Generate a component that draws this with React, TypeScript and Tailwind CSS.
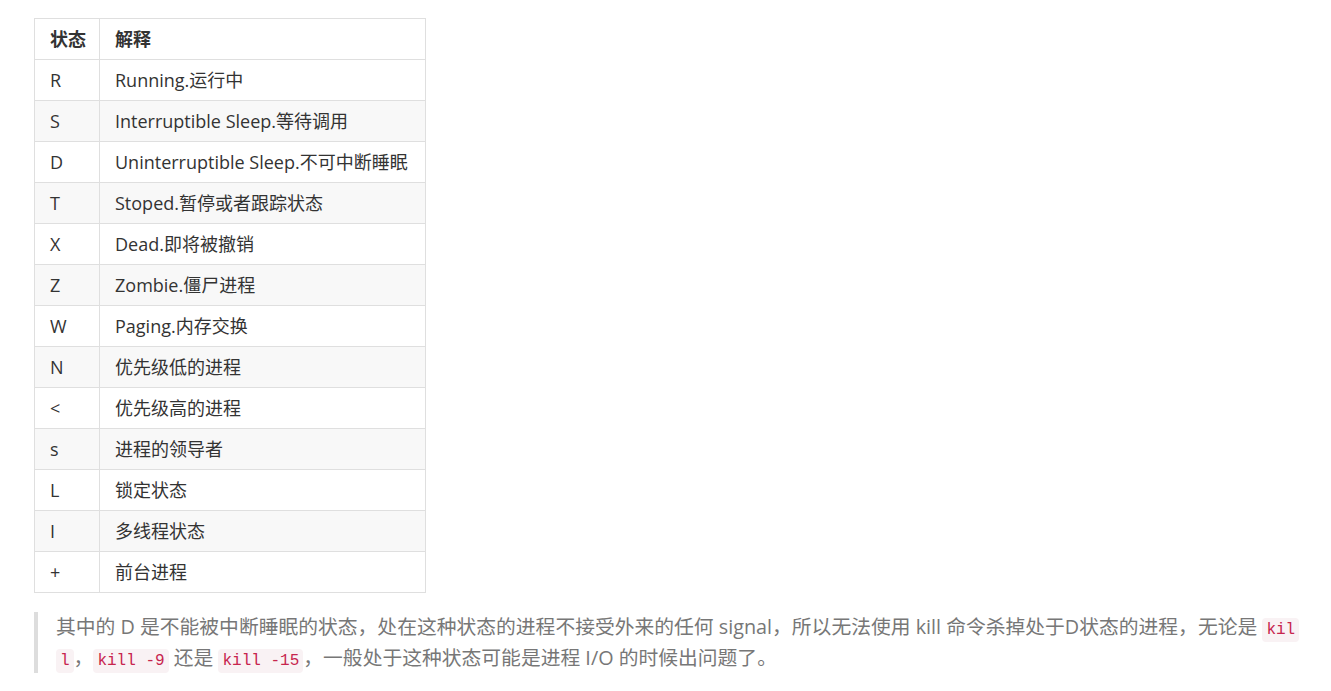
import React from "react";

const rows: [string, string][] = [
  ["R", "Running.运行中"],
  ["S", "Interruptible Sleep.等待调用"],
  ["D", "Uninterruptible Sleep.不可中断睡眠"],
  ["T", "Stoped.暂停或者跟踪状态"],
  ["X", "Dead.即将被撤销"],
  ["Z", "Zombie.僵尸进程"],
  ["W", "Paging.内存交换"],
  ["N", "优先级低的进程"],
  ["<", "优先级高的进程"],
  ["s", "进程的领导者"],
  ["L", "锁定状态"],
  ["I", "多线程状态"],
  ["+", "前台进程"],
];

const font = { fontFamily: '"Open Sans", "Noto Sans CJK SC", sans-serif' };

function Code({ children }: { children: React.ReactNode }) {
  return (
    <code className="font-['Liberation_Mono',monospace] text-[16px] leading-none text-[#c7254e] bg-[#f9f2f4] rounded-[4px] px-[4px] py-[3px] [box-decoration-break:clone]">
      {children}
    </code>
  );
}

export default function App() {
  return (
    <div className="bg-white min-h-[691px] pl-[34px] pt-[18px] font-['Open_Sans','Noto_Sans_CJK_SC',sans-serif]" style={font}>
      <table className="table-fixed border-collapse text-[18px] text-[#333] w-[391px]">
        <colgroup>
          <col className="w-[65px]" />
          <col className="w-[326px]" />
        </colgroup>
        <thead>
          <tr className="bg-white">
            <th className="border border-[#dfdfdf] h-[41px] px-[15px] text-left font-bold whitespace-nowrap">状态</th>
            <th className="border border-[#dfdfdf] h-[41px] px-[15px] text-left font-bold whitespace-nowrap">解释</th>
          </tr>
        </thead>
        <tbody>
          {rows.map(([k, v], i) => (
            <tr key={i} className={i % 2 === 1 ? "bg-[#f8f8f8]" : "bg-white"}>
              <td className="border border-[#dfdfdf] h-[41px] px-[15px] whitespace-nowrap">{k}</td>
              <td className="border border-[#dfdfdf] h-[41px] px-[15px] whitespace-nowrap">{v}</td>
            </tr>
          ))}
        </tbody>
      </table>
      <blockquote className="mt-[19px] w-[1266px] border-l-[4px] border-[#dddddd] pl-[18px] text-[19.8px] leading-[30.5px] text-[#777]">
        其中的 D 是不能被中断睡眠的状态，处在这种状态的进程不接受外来的任何 signal，所以无法使用 kill 命令杀掉处于D状态的进程，无论是 <Code>kil<br />l</Code>，<Code>kill -9</Code> 还是 <Code>kill -15</Code>，一般处于这种状态可能是进程 I/O 的时候出问题了。
      </blockquote>
    </div>
  );
}
